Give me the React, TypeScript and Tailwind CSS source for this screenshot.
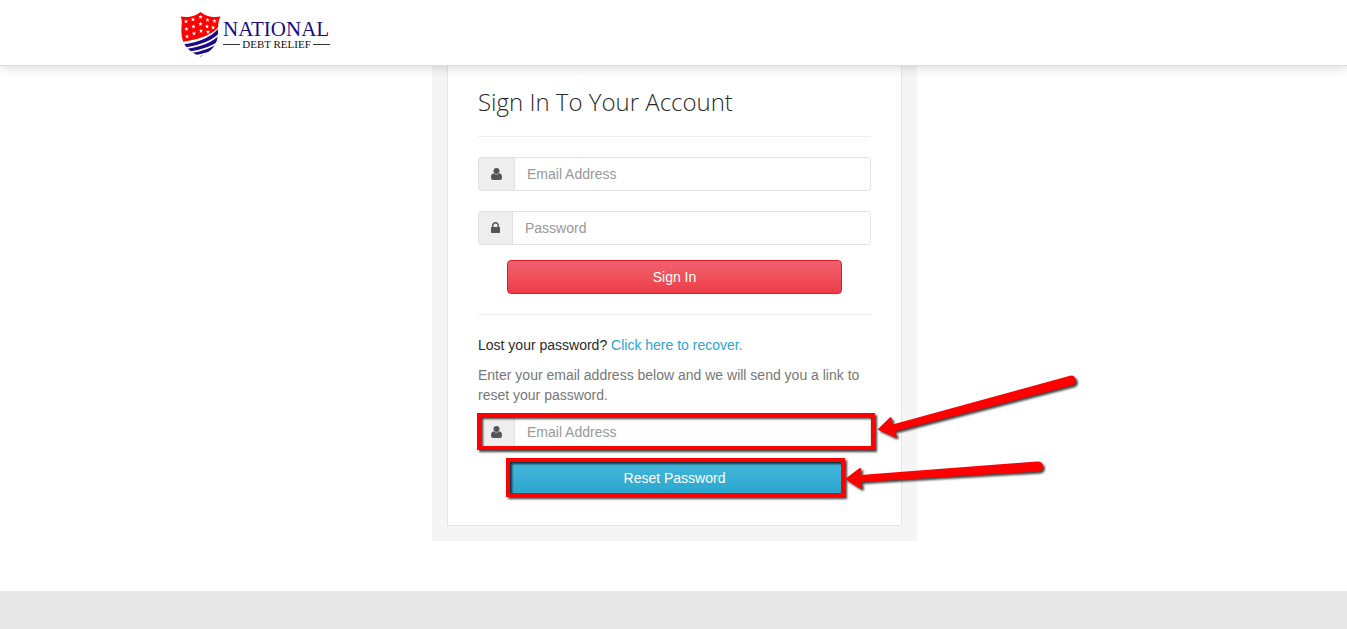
import { useState, type FormEvent, type ReactNode } from "react";

const fieldCls =
  "h-[34px] min-w-0 flex-1 rounded-r border border-[#e2e2e2] bg-white px-3 text-sm text-[#555] outline-none placeholder:text-[#999] placeholder:opacity-100";
const buttonCls = "block h-[34px] w-full rounded border text-center text-sm text-white";

export default function App() {
  const [email, setEmail] = useState("");
  const [password, setPassword] = useState("");
  const [resetEmail, setResetEmail] = useState("");

  const onSubmit = (e: FormEvent) => e.preventDefault();

  return (
    <div className="flex min-h-screen flex-col overflow-x-hidden bg-white font-['Liberation_Sans',Arial,sans-serif] text-sm text-[#2b2b2b]">
      <header className="relative z-10 border-b border-[#dcdcdc] bg-white shadow-[0_2px_10px_rgba(0,0,0,0.15)]">
        <div className="mx-auto flex h-[65px] max-w-[987px] items-start pt-3">
          <Logo />
        </div>
      </header>

      <main className="pl-0.5">
        <div className="mx-auto w-full max-w-[485px] bg-[#f5f5f5] px-[15px] pb-[15px]">
          <div className="border border-t-0 border-[#e5e5e5] bg-white px-[30px] pt-5 pb-[30px]">
            <h1 className="font-['Open_Sans',sans-serif] text-2xl leading-8 font-light">Sign In To Your Account</h1>

            <form onSubmit={onSubmit} className="mt-[18px] border-y border-[#eee] py-5">
              <Field id="email" label="Email Address" icon={<UserIcon />}>
                <input id="email" type="email" placeholder="Email Address" className={fieldCls} value={email} onChange={(e) => setEmail(e.target.value)} />
              </Field>
              <div className="mt-5">
                <Field id="password" label="Password" icon={<LockIcon />}>
                  <input id="password" type="password" placeholder="Password" className={fieldCls} value={password} onChange={(e) => setPassword(e.target.value)} />
                </Field>
              </div>
              <div className="mt-[15px] px-[29px]">
                <button type="submit" className={`${buttonCls} border-[#dd1a2c] bg-linear-to-b from-[#f0626c] to-[#ed3b49]`}>Sign In</button>
              </div>
            </form>

            <p className="mt-5 leading-5">
              Lost your password? <a href="#recover" className="text-[#2fa4cb]">Click here to recover.</a>
            </p>

            <form id="recover" onSubmit={onSubmit}>
              <p className="mt-2.5 leading-5 text-[#777]">Enter your email address below and we will send you a link to reset your password.</p>
              <div className="relative mt-2.5">
                <Field id="reset-email" label="Email Address" icon={<UserIcon />}>
                  <input id="reset-email" type="email" placeholder="Email Address" className={fieldCls} value={resetEmail} onChange={(e) => setResetEmail(e.target.value)} />
                </Field>
                <div className="pointer-events-none absolute -top-0.5 -right-1 -bottom-px -left-px border-4 border-[#fe0000] drop-shadow-[2px_2px_1px_rgba(0,0,0,0.75)]" />
                <svg className="pointer-events-none absolute -top-11 left-full h-[74px] w-[214px] overflow-visible drop-shadow-[2px_2px_1px_rgba(0,0,0,0.75)]" viewBox="0 0 214 74" fill="#fe0000" aria-hidden="true">
                  <path d="M6.5 58.500 18.500 46.800Q21 45 21 48.500L21.500 53.500 199 4.700A5 5 0 0 1 201.600 14.300L23 60.500 25.500 64Q26.500 67 23 66Z" />
                </svg>
              </div>
              <div className="mt-3 px-[29px]">
                <div className="relative">
                  <button type="submit" className={`${buttonCls} border-[#2292b8] bg-linear-to-b from-[#43b6d9] to-[#2ba7cf]`}>Reset Password</button>
                  <div className="pointer-events-none absolute -top-[3px] -right-[3px] -bottom-0.5 -left-px border-4 border-[#fe0000] drop-shadow-[2px_2px_1px_rgba(0,0,0,0.75)]" />
                  <svg className="pointer-events-none absolute -top-[3px] left-full h-[38px] w-[208px] overflow-visible drop-shadow-[2px_2px_1px_rgba(0,0,0,0.75)]" viewBox="0 0 208 38" fill="#fe0000" aria-hidden="true">
                    <path d="M3 21 17 10.500Q19.500 9 19.300 12L18.500 17 195.500 3.500A5 5 0 0 1 196.500 13.500L19 24 20 28.500Q20 32 17 30Z" />
                  </svg>
                </div>
              </div>
            </form>
          </div>
        </div>
      </main>

      <footer className="mt-[50px] min-h-[38px] flex-1 bg-[#e8e8e8]" />
    </div>
  );
}

function Field({ id, label, icon, children }: { id: string; label: string; icon: ReactNode; children: ReactNode }) {
  return (
    <div className="flex">
      <label htmlFor={id} aria-label={label} className="flex items-center rounded-l border border-r-0 border-[#e2e2e2] bg-[#eee] px-3 text-[#555]">
        {icon}
      </label>
      {children}
    </div>
  );
}

function UserIcon() {
  return (
    <svg className="h-3.5 w-[11px]" viewBox="0 0 11 14" fill="currentColor" aria-hidden="true">
      <circle cx="5.500" cy="4" r="3" />
      <path d="M2.600 6.200Q5.500 8.800 8.400 6.200 11 6.500 11 10.500 11 13 9 13H2Q0 13 0 10.500 0 6.500 2.600 6.200Z" />
    </svg>
  );
}

function LockIcon() {
  return (
    <svg className="h-3.5 w-[9px]" viewBox="320 0 1152 1792" fill="currentColor" aria-hidden="true">
      <path d="M640 768h512v-192q0-106-75-181t-181-75-181 75-75 181v192zm832 96v576q0 40-28 68t-68 28h-960q-40 0-68-28t-28-68v-576q0-40 28-68t68-28h32v-192q0-184 132-316t316-132 316 132 132 316v192h32q40 0 68 28t28 68z" />
    </svg>
  );
}

const STARS = [
  [20.5, 5], [13, 7.5], [27.500, 8], [34.500, 9], [6, 9.500], [20.500, 12],
  [13.500, 14.500], [27, 14.500], [6.500, 17], [33, 15.500], [21, 19], [14, 21.500], [7, 24.500], [28, 20],
];

function Logo() {
  return (
    <a href="#home" className="flex font-['Liberation_Serif',serif]">
      <svg className="h-[45px] w-[41px]" viewBox="0 0 41 45" aria-hidden="true">
        <clipPath id="shield">
          <path d="M20.500 0C16 4 8 6 .5 4.500 3 9 1 14 1.500 21 2 32 7 39 20.500 44.600 33 39 37.500 32 38 21 38 14 38 9 40.500 4.500 33 6 25 4 20.500 0Z" />
        </clipPath>
        <g clipPath="url(#shield)">
          <path d="M0 0H41V11Q35 25 2 30L0 30Z" fill="#fe0000" />
          <g fill="#1b0a84">
            <path d="M2 32.500Q31 29 41 13V19.500Q30 32 4 35.500Z" />
            <path d="M4 37.200Q30 34 41 21.500V27Q30 37 7 40Z" />
            <path d="M8 41.500Q29 39 41 29V34Q28 42 12 43.500Z" />
            <path d="M14 45Q30 43 40 36V45Z" />
          </g>
          {STARS.map(([x, y]) => (
            <path key={`${x}-${y}`} transform={`translate(${x} ${y})`} fill="#fff" d="M0-2.200 .6-.7 2.200-.7.900.300 1.400 1.900 0 1-1.400 1.900-.9.300-2.200-.7-.6-.7Z" />
          ))}
        </g>
      </svg>
      <span className="ml-0.5 w-[107px] pt-[7px]">
        <span className="block text-[21px] leading-5 text-[#1b0a84]">NATIONAL</span>
        <span className="mt-px flex items-center gap-0.5 text-[11px] leading-2 text-[#111]">
          <span className="h-px flex-1 bg-[#333]" />
          DEBT RELIEF
          <span className="h-px flex-1 bg-[#333]" />
        </span>
      </span>
    </a>
  );
}
